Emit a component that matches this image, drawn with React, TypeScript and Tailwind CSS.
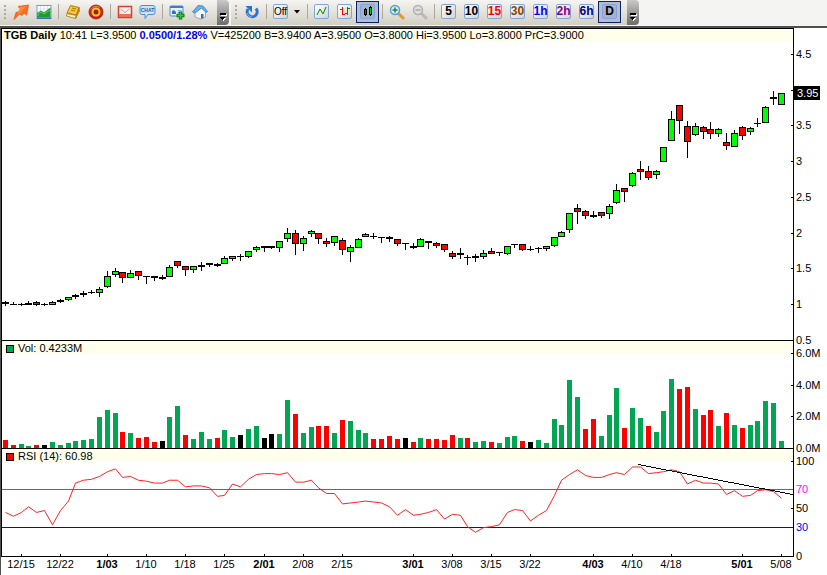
import React from 'react';
import clsx from 'clsx';

type Kind = 'up' | 'down' | 'flat';
type Candle = [high: number, top: number, bottom: number, low: number, kind: Kind];

const u: Kind = 'up';
const d: Kind = 'down';
const f: Kind = 'flat';

// high, body top, body bottom, low: chart rows, top row of the window is 0
const candles: Candle[] = [
  [301, 302, 304, 306, f], [302, 304, 305, 305, f], [303, 304, 305, 306, f], [301, 303, 305, 305, f],
  [301, 302, 305, 306, d], [303, 304, 305, 306, f], [301, 302, 305, 305, u], [299, 300, 302, 303, f],
  [297, 297, 300, 301, u], [294, 295, 297, 299, f], [291, 293, 295, 297, f], [290, 292, 293, 294, f],
  [287, 289, 293, 297, u], [271, 276, 287, 288, u], [268, 271, 275, 277, u], [272, 272, 278, 283, d],
  [270, 273, 278, 278, u], [271, 271, 276, 280, d], [276, 276, 277, 284, f], [276, 276, 278, 281, f],
  [275, 277, 279, 280, f], [265, 267, 277, 277, u], [261, 261, 266, 268, d], [266, 266, 270, 276, d],
  [266, 266, 270, 273, u], [262, 265, 267, 271, f], [263, 263, 265, 267, f], [263, 264, 266, 267, f],
  [256, 258, 264, 264, u], [256, 256, 259, 261, u], [254, 256, 257, 261, f], [251, 251, 257, 258, u],
  [246, 247, 250, 252, u], [246, 246, 248, 252, f], [246, 246, 248, 249, f], [241, 241, 248, 252, u],
  [228, 233, 239, 242, u], [230, 233, 244, 255, d], [236, 238, 244, 251, u], [230, 231, 234, 237, u],
  [233, 233, 239, 244, d], [238, 241, 244, 247, d], [236, 236, 243, 246, u], [238, 240, 250, 255, d],
  [245, 247, 252, 262, u], [238, 239, 248, 248, u], [233, 234, 237, 237, u], [233, 236, 237, 239, f],
  [237, 237, 238, 243, f], [236, 237, 239, 242, f], [239, 239, 244, 246, d], [243, 243, 244, 250, f],
  [243, 246, 248, 249, f], [238, 239, 247, 247, u], [241, 241, 243, 249, f], [242, 243, 246, 248, d],
  [244, 244, 250, 252, d], [251, 253, 257, 259, d], [248, 253, 255, 259, f], [255, 257, 258, 265, f],
  [254, 256, 258, 262, f], [250, 253, 257, 259, u], [248, 251, 254, 254, d], [252, 252, 253, 256, f],
  [246, 246, 254, 255, u], [244, 244, 245, 248, f], [244, 244, 250, 251, d], [246, 249, 250, 251, f],
  [247, 248, 249, 253, f], [246, 246, 249, 251, u], [237, 237, 246, 247, u], [231, 232, 237, 237, u],
  [213, 213, 230, 233, u], [204, 208, 212, 224, d], [210, 211, 216, 219, d], [211, 215, 217, 218, f],
  [212, 212, 216, 218, d], [204, 206, 214, 219, u], [184, 190, 203, 204, u], [188, 188, 192, 202, d],
  [172, 173, 186, 187, u], [161, 169, 172, 180, d], [166, 171, 178, 180, d], [170, 171, 175, 179, u],
  [147, 147, 162, 162, u], [111, 119, 141, 141, u], [105, 105, 121, 134, d], [121, 126, 142, 158, d],
  [123, 126, 135, 136, u], [126, 127, 132, 139, d], [122, 129, 134, 139, d], [128, 129, 134, 137, u],
  [133, 142, 146, 150, d], [130, 133, 147, 147, u], [126, 127, 136, 140, d], [127, 128, 132, 135, u],
  [118, 123, 124, 127, f], [106, 107, 123, 123, u], [91, 97, 99, 105, f], [93, 93, 105, 105, u],
];

const volumes: [number, Kind][] = [
  [8, d], [3, d], [4, u], [2, u], [3, d], [3, f], [6, u], [3, u], [5, u], [7, u],
  [8, u], [9, u], [31, u], [38, u], [35, u], [16, d], [15, u], [10, d], [11, d], [6, d],
  [7, f], [31, u], [42, u], [13, d], [9, u], [16, u], [9, u], [10, d], [18, u], [11, u],
  [13, f], [19, u], [22, u], [10, f], [14, f], [14, u], [48, u], [34, d], [15, u], [21, u],
  [22, d], [22, d], [15, u], [28, d], [27, u], [18, u], [15, u], [9, d], [9, d], [12, d],
  [9, d], [10, f], [6, d], [10, u], [9, d], [9, d], [8, d], [13, d], [10, u], [10, d],
  [6, u], [7, u], [6, d], [5, u], [11, u], [12, u], [7, d], [6, f], [8, u], [5, u],
  [29, u], [23, u], [68, u], [51, u], [19, d], [29, d], [12, u], [33, u], [60, u], [20, d],
  [40, u], [30, u], [22, d], [16, u], [37, u], [69, u], [59, d], [61, d], [39, u], [33, d],
  [38, d], [22, u], [35, d], [23, u], [20, d], [23, u], [27, u], [47, u], [45, u], [7, u],
];

const rsi = [
  46, 42, 46, 52, 46, 48, 33, 48, 58, 77, 80, 81, 84, 89, 92, 83, 84, 80, 79, 77,
  77, 80, 80, 73, 74, 74, 72, 63, 64, 76, 73, 81, 86, 87, 87, 86, 88, 78, 78, 80,
  72, 66, 66, 55, 56, 57, 58, 57, 56, 52, 43, 49, 43, 44, 46, 49, 39, 44, 43, 31,
  25, 30, 31, 33, 46, 49, 48, 37, 43, 48, 64, 80, 86, 91, 85, 83, 83, 86, 88, 86,
  94, 94, 87, 88, 89, 91, 89, 76, 80, 77, 77, 76, 65, 69, 63, 64, 69, 70, 68, 61,
];

const dates = [
  { bar: 2, label: '12/15' },
  { bar: 7, label: '12/22' },
  { bar: 13, label: '1/03', month: true },
  { bar: 18, label: '1/10' },
  { bar: 23, label: '1/18' },
  { bar: 28, label: '1/25' },
  { bar: 33, label: '2/01', month: true },
  { bar: 38, label: '2/08' },
  { bar: 43, label: '2/15' },
  { bar: 52, label: '3/01', month: true },
  { bar: 57, label: '3/08' },
  { bar: 62, label: '3/15' },
  { bar: 67, label: '3/22' },
  { bar: 75, label: '4/03', month: true },
  { bar: 80, label: '4/10' },
  { bar: 85, label: '4/18' },
  { bar: 94, label: '5/01', month: true },
  { bar: 99, label: '5/08' },
];

const axisLabels = [
  { y: 54, label: '4.5' },
  { y: 125, label: '3.5' },
  { y: 161, label: '3' },
  { y: 197, label: '2.5' },
  { y: 233, label: '2' },
  { y: 268, label: '1.5' },
  { y: 304, label: '1' },
  { y: 340, label: '0.5' },
  { y: 353, label: '6.0M' },
  { y: 385, label: '4.0M' },
  { y: 416, label: '2.0M' },
  { y: 448, label: '0.0M' },
  { y: 461, label: '100' },
  { y: 489, label: '70', color: '#ff00ff' },
  { y: 508, label: '50' },
  { y: 527, label: '30', color: '#0000ff' },
  { y: 556, label: '0' },
];

const PLOT_WIDTH = 791;
const barX = (i: number) => Math.floor(3.35 + i * 7.84);
const rsiY = (v: number) => 107 - v * 0.947;

const candleFill = { up: '#00ff00', down: '#ff0000', flat: '#000000' };
const volumeFill = { up: '#00a651', down: '#ff0000', flat: '#000000' };

/* ---------- toolbar ---------- */

const Separator = () => (
  <div className="flex w-1.5 shrink-0 justify-center">
    <div className="h-[15px] w-px bg-[#aaa79c]" />
  </div>
);

const Grip = () => (
  <div className="flex w-[9px] shrink-0 flex-col items-center gap-0.5">
    {[0, 1, 2, 3].map((n) => (
      <span key={n} className="size-0.5 bg-[#aaa8a0]" />
    ))}
  </div>
);

const Overflow = () => (
  <button
    aria-label="Toolbar options"
    className="flex h-[25px] w-3 shrink-0 flex-col items-center justify-end self-start rounded-r-sm bg-linear-to-b from-[#c9c9c9] to-[#6d6d6d] pb-1"
  >
    <svg width="8" height="8" viewBox="0 0 8 8" shapeRendering="crispEdges">
      <path d="M2 1h6v2H2zM2 5h5v1H6v1H5v1H4V7H3V6H2z" fill="#fff" />
      <path d="M1 0h6v2H1zM1 4h5v1H5v1H4v1H3V6H2V5H1z" fill="#000" />
    </svg>
  </button>
);

type ToolProps = { label: string; active?: boolean; children: React.ReactNode };

const Tool = ({ label, active, children }: ToolProps) => (
  <button
    aria-label={label}
    aria-pressed={active}
    className={clsx(
      'flex h-[22px] w-[23px] shrink-0 items-center justify-center',
      active && 'border border-[#0a246a] bg-[#b4bbd2]',
    )}
  >
    {children}
  </button>
);

type TileProps = { active?: boolean; className?: string; children: React.ReactNode };

const Tile = ({ active, className = 'text-black', children }: TileProps) => (
  <span
    className={clsx(
      'flex size-[15px] shrink-0 items-center justify-center rounded-[2px] border border-[#7ea6dc] leading-[13px]',
      active ? 'bg-[#a9b2cd]' : 'bg-linear-to-br from-white to-[#d5d3d0]',
      className,
    )}
  >
    {children}
  </span>
);

const ArrowIcon = () => (
  <svg width="16" height="16" viewBox="0 0 16 16">
    <path d="M5 2.500 15.500 1 13.500 11 11 9 9 11.500 6.500 10 1 15.500 3 8.500 7 7.500 8 5z" fill="#ff6d1c" stroke="#e8551c" strokeWidth=".8" />
    <path d="M7 3 13.500 2 9 6.500 8 9 4.500 10" fill="#ff8c3c" />
  </svg>
);

const ChartIcon = () => (
  <svg width="16" height="16" viewBox="0 0 16 16">
    <rect x="1" y="1.500" width="14" height="13" fill="#fff" stroke="#6a9ce0" />
    <path d="M4.500 2v12M8 2v12M11.500 2v12M1 5h14M1 8h14" stroke="#c7dbf5" strokeWidth=".7" />
    <path d="M1 13V9l4-2.500 3 2 6.500-5V13z" fill="#1c9c30" />
    <path d="M2 12v-2l3-2 3 2 6-4" stroke="#65cf5c" fill="none" />
    <path d="M1 14h14" stroke="#2463ba" strokeWidth="1.500" />
  </svg>
);

const BookIcon = () => (
  <svg width="16" height="16" viewBox="0 0 16 16">
    <path d="M5.500 1.500 14 3.500 11.500 11 2 9z" fill="#f8c93e" stroke="#b07a08" />
    <path d="M2 9.500 1.500 12 10.500 14.500 11.500 11.500z" fill="#fff3c4" stroke="#a97405" strokeWidth=".8" />
    <path d="M14 3.500 14.500 7 10.500 14.500 11.500 11z" fill="#d9951a" stroke="#a97405" strokeWidth=".8" />
    <path d="M7 4l4 1M6 6l4 1" stroke="#a97405" />
  </svg>
);

const TargetIcon = () => (
  <svg width="16" height="16" viewBox="0 0 16 16">
    <circle cx="8" cy="8" r="7" fill="#cf2317" stroke="#8e1b10" strokeWidth=".8" />
    <circle cx="8" cy="8" r="4.500" fill="#ffc824" />
    <circle cx="8" cy="8" r="2.500" fill="#9c1d0c" />
    <path d="M3 5.500A6 6 0 0 1 12 3.500" fill="none" stroke="#f58567" />
  </svg>
);

const MailIcon = () => (
  <svg width="16" height="16" viewBox="0 0 16 16">
    <rect x="1.500" y="2.500" width="13" height="11" fill="#fbeeeb" stroke="#d4412c" strokeWidth="1.500" />
    <rect x="2" y="10" width="12" height="3" fill="#ec7057" />
    <path d="M3.500 5 8 8.500 12.500 5" fill="none" stroke="#c9a29b" />
  </svg>
);

const ChatIcon = () => (
  <svg width="17" height="16" viewBox="0 0 17 16">
    <path d="M3 1.500h11q2 0 2 2v5q0 2-2 2H9l-3 4v-4H3q-2 0-2-2v-5q0-2 2-2z" fill="#c9e3fb" stroke="#4b8fdc" />
    <text x="8.500" y="8" textAnchor="middle" fontSize="5" fontWeight="bold" fill="#1c5cae">CHAT</text>
  </svg>
);

const AddChartIcon = () => (
  <svg width="16" height="16" viewBox="0 0 16 16">
    <rect x="1" y="2" width="13" height="10" rx="1" fill="#e8f2fd" stroke="#4d8bd7" />
    <path d="M1 3h13" stroke="#3f7dcc" strokeWidth="2" />
    <path d="M3 10V7l2-1 2 2v2z" fill="#2f74c4" />
    <path d="M8.500 6.500h4M8.500 8.500h3" stroke="#86aedb" />
    <path d="M11.500 7.500v8M7.500 11.500h8" stroke="#0c7a1c" strokeWidth="3.500" />
    <path d="M11.500 8.500v6M8.500 11.500h6" stroke="#35c83d" strokeWidth="1.500" />
  </svg>
);

const HomeIcon = () => (
  <svg width="16" height="16" viewBox="0 0 16 16">
    <path d="M3 7.500V13l5.500 2 5-2V7L9 3z" fill="#f4f7fa" stroke="#8396aa" strokeWidth=".8" />
    <path d="M.5 8 6 1.500 11 2 15.500 7.500 14 8.500 9.500 4 3 9z" fill="#6bb3ec" stroke="#2f78ba" strokeWidth=".8" />
    <path d="M9 10h2.500v4L9 15z" fill="#3f6e9e" />
  </svg>
);

const RefreshIcon = () => (
  <svg width="16" height="16" viewBox="0 0 16 16">
    <path d="M12 4.500A5 5 0 1 1 4 5" fill="none" stroke="#2c70d0" strokeWidth="3" />
    <path d="M1.500 2H8v6.500z" fill="#2c70d0" />
    <path d="M3.500 9A4.500 4.500 0 0 0 8 13" fill="none" stroke="#7fb4f2" />
  </svg>
);

const ZoomIcon = ({ plus }: { plus?: boolean }) => (
  <svg width="16" height="16" viewBox="0 0 16 16">
    <path d="M9 9l5 5" stroke={plus ? '#e39a2c' : '#b9b9b9'} strokeWidth="3" strokeLinecap="round" />
    <circle cx="6" cy="6" r="4.500" fill={plus ? '#d7ecfb' : '#dedede'} stroke={plus ? '#5a9bd4' : '#b0b0b0'} strokeWidth="1.500" />
    <path d={plus ? 'M6 3.500v5M3.500 6h5' : 'M3.500 6h5'} stroke={plus ? '#109030' : '#a8a8a8'} strokeWidth="1.500" />
  </svg>
);

const intervals = [
  { label: '5', color: 'text-black' },
  { label: '10', color: 'text-black' },
  { label: '15', color: 'text-[#ff0000]' },
  { label: '30', color: 'text-[#884400]' },
  { label: '1h', color: 'text-[#0000ff]' },
  { label: '2h', color: 'text-[#880088]' },
  { label: '6h', color: 'text-[#000088]' },
  { label: 'D', color: 'text-black', active: true },
];

const ToolGroup = ({ children }: { children: React.ReactNode }) => (
  <div className="flex h-[25px] items-center bg-linear-to-b from-[#f5f4f1] to-[#d2cfc4] pr-1.5 pb-0.5">
    {children}
  </div>
);

const Toolbar = () => (
  <header className="flex h-[26px] items-start gap-0 bg-[#f4f4f2]">
    <ToolGroup>
      <Grip />
      <Tool label="Go"><ArrowIcon /></Tool>
      <Tool label="New chart"><ChartIcon /></Tool>
      <Separator />
      <Tool label="Alerts"><BookIcon /></Tool>
      <Tool label="Scanner"><TargetIcon /></Tool>
      <Separator />
      <Tool label="Messages"><MailIcon /></Tool>
      <Tool label="Chat"><ChatIcon /></Tool>
      <Separator />
      <Tool label="Add window"><AddChartIcon /></Tool>
      <Tool label="Home"><HomeIcon /></Tool>
    </ToolGroup>
    <Overflow />
    <div className="pl-0.5">
      <ToolGroup>
        <Grip />
        <Tool label="Refresh"><RefreshIcon /></Tool>
        <Separator />
        <button aria-label="Drawing mode: Off" className="flex h-[22px] w-[35px] shrink-0 items-center gap-1.5 pl-1">
          <Tile className="text-[10px]">Off</Tile>
          <svg width="6" height="4" viewBox="0 0 6 4"><path d="M0 0h6L3 3.500z" /></svg>
        </button>
        <Separator />
        <Tool label="Line chart">
          <Tile>
            <svg width="13" height="13" viewBox="0 0 13 13"><path d="M2 10 5 4l3 5 3-7" fill="none" stroke="#008800" /></svg>
          </Tile>
        </Tool>
        <Tool label="Bar chart">
          <Tile>
            <svg width="13" height="13" viewBox="0 0 13 13" shapeRendering="crispEdges">
              <path d="M4.500 2v8M2 4.500h2M5 9.500h2" stroke="#ff0000" />
              <path d="M9.500 2v8M7 8.500h2M10 3.500h2" stroke="#008800" />
            </svg>
          </Tile>
        </Tool>
        <Tool label="Candle chart" active>
          <Tile active>
            <svg width="13" height="13" viewBox="0 0 13 13" shapeRendering="crispEdges">
              <path d="M4.500 3v8M9.500 1v10" stroke="#000" />
              <rect x="3.500" y="4.500" width="2" height="5" fill="#ff0000" stroke="#000" />
              <rect x="8.500" y="2.500" width="2" height="7" fill="#00cc00" stroke="#000" />
            </svg>
          </Tile>
        </Tool>
        <Separator />
        <Tool label="Zoom in"><ZoomIcon plus /></Tool>
        <Tool label="Zoom out"><ZoomIcon /></Tool>
        <Separator />
        {intervals.map(({ label, color, active }) => (
          <Tool key={label} label={label} active={active}>
            <Tile className={clsx(color, 'text-xs leading-[13px] font-bold')} active={active}>{label}</Tile>
          </Tool>
        ))}
      </ToolGroup>
    </div>
    <Overflow />
  </header>
);

/* ---------- panels ---------- */

type PanelProps = { title: React.ReactNode; viewBox: string; height: string; children: React.ReactNode };

const Panel = ({ title, viewBox, height, children }: PanelProps) => (
  <section className="grid border-t border-black">
    <div className="col-start-1 row-start-1 h-[13px] overflow-hidden bg-[#ffffec] whitespace-nowrap">
      {title}
    </div>
    <svg
      viewBox={viewBox}
      preserveAspectRatio="none"
      shapeRendering="crispEdges"
      className={clsx('col-start-1 row-start-1 w-full', height)}
    >
      {children}
    </svg>
  </section>
);

const Ticks = ({ at }: { at: number[] }) => (
  <>
    {at.map((y) => (
      <rect key={y} x={PLOT_WIDTH - 2} y={y} width="2" height="1" />
    ))}
  </>
);

const Legend = ({ color, children }: { color: string; children: React.ReactNode }) => (
  <div className="flex items-center gap-1 pl-1 leading-[15px]">
    <span className={clsx('size-2 border border-black', color)} />
    {children}
  </div>
);

const PricePanel = () => (
  <Panel
    viewBox="0 29 791 311"
    height="h-[311px]"
    title={
      <p className="pl-0.5 leading-[13px]">
        <b>TGB Daily</b> 10:41 L=3.9500 <b className="text-[#0000ff]">0.0500/1.28%</b> V=425200 B=3.9400
        A=3.9500 O=3.8000 Hi=3.9500 Lo=3.8000 PrC=3.9000
      </p>
    }
  >
    {candles.map(([high, top, bottom, low, kind], i) => (
      <g key={i}>
        <rect x={barX(i)} y={high} width="1" height={low - high} />
        <rect x={barX(i) - 3} y={top} width="7" height={bottom - top} />
        {kind !== 'flat' && (
          <rect x={barX(i) - 2} y={top + 1} width="5" height={bottom - top - 2} fill={candleFill[kind]} />
        )}
      </g>
    ))}
    <Ticks at={[54, 90, 125, 161, 197, 233, 268, 304]} />
  </Panel>
);

const VolumePanel = () => (
  <Panel viewBox="0 0 791 107" height="h-[107px]" title={<Legend color="bg-[#00a651]">Vol: 0.4233M</Legend>}>
    {volumes.map(([height, kind], i) => (
      <rect key={i} x={barX(i) - 2} y={107 - height} width="5" height={height} fill={volumeFill[kind]} />
    ))}
    <Ticks at={[12, 44, 75]} />
  </Panel>
);

const RsiPanel = () => (
  <Panel viewBox="0 0 791 107" height="h-[107px]" title={<Legend color="bg-[#ff0000]">RSI (14): 60.98</Legend>}>
    <rect x="0" y="40" width="791" height="1" fill="#ff00ff" />
    <rect x="0" y="78" width="791" height="1" fill="#0000ff" />
    <polyline
      points={rsi.map((v, i) => `${barX(i) + 0.5},${rsiY(v)}`).join(' ')}
      fill="none"
      stroke="#ff2020"
      shapeRendering="auto"
    />
    <path d="M636 15.500 791 45.500" stroke="#000" />
    {dates.map(({ bar }) => (
      <rect key={bar} x={barX(bar)} y="105" width="1" height="2" />
    ))}
    <Ticks at={[12, 59]} />
  </Panel>
);

const DateAxis = () => (
  <svg className="h-[18px] w-full overflow-visible">
    {dates.map(({ bar, label, month }) => (
      <text
        key={bar}
        x={`${(barX(bar) / PLOT_WIDTH) * 100}%`}
        y="11"
        textAnchor="middle"
        fontWeight={month ? 'bold' : 'normal'}
      >
        {label}
      </text>
    ))}
  </svg>
);

const ValueAxis = () => (
  <svg viewBox="0 28 33 547" className="h-[547px] w-[33px] shrink-0">
    {axisLabels.map(({ y, label, color }) => (
      <text key={y} x="2" y={y + 4} fill={color}>
        {label}
      </text>
    ))}
    <rect x="0" y="86" width="26" height="14" />
    <text x="3" y="97" fill="#fff">3.95</text>
  </svg>
);

const App: React.FC = () => (
  <div className="min-h-screen bg-white font-['Liberation_Sans',Arial,sans-serif] text-[11px] text-black">
    <Toolbar />
    <main className="border-t-2 border-l border-[#505050]">
      <div className="flex">
        <div className="min-w-0 flex-1">
          <div className="border-x border-b border-black">
            <PricePanel />
            <VolumePanel />
            <RsiPanel />
          </div>
          <div className="px-px">
            <DateAxis />
          </div>
        </div>
        <ValueAxis />
      </div>
    </main>
  </div>
);

export default App;
